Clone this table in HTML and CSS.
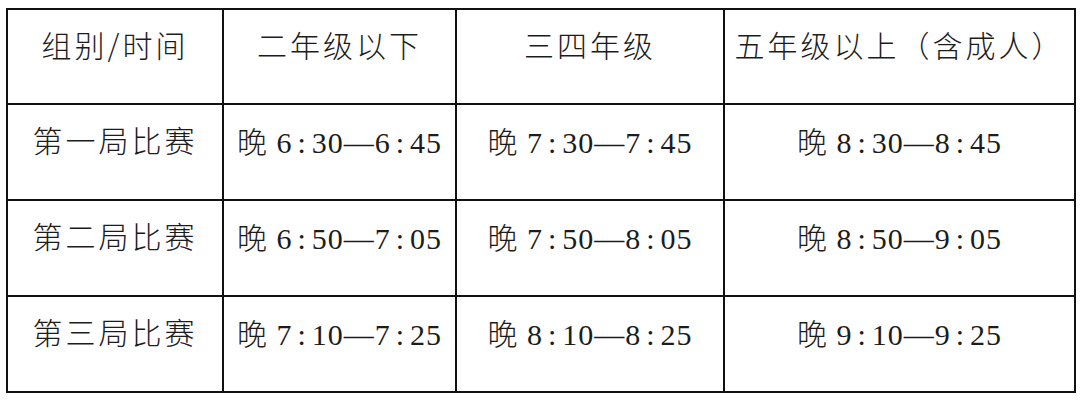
FILE: index.html
```html
<!DOCTYPE html>
<html>
<head>
<meta charset="utf-8">
<link rel="stylesheet" href="styles.css">
</head>
<body>
<table class="sched">
  <colgroup>
    <col class="c1"><col class="c2"><col class="c3"><col class="c4">
  </colgroup>
  <tr class="head">
    <td lang="zh-CN">组别/时间</td>
    <td lang="zh-CN">二年级以下</td>
    <td lang="zh-CN">三四年级</td>
    <td lang="zh-CN">五年级以上（含成人）</td>
  </tr>
  <tr>
    <td lang="zh-CN">第一局比赛</td>
    <td class="t"><span class="cj">晚</span> 6<span class="co">:</span>30—6<span class="co">:</span>45</td>
    <td class="t"><span class="cj">晚</span> 7<span class="co">:</span>30—7<span class="co">:</span>45</td>
    <td class="t"><span class="cj">晚</span> 8<span class="co">:</span>30—8<span class="co">:</span>45</td>
  </tr>
  <tr>
    <td lang="zh-CN">第二局比赛</td>
    <td class="t"><span class="cj">晚</span> 6<span class="co">:</span>50—7<span class="co">:</span>05</td>
    <td class="t"><span class="cj">晚</span> 7<span class="co">:</span>50—8<span class="co">:</span>05</td>
    <td class="t"><span class="cj">晚</span> 8<span class="co">:</span>50—9<span class="co">:</span>05</td>
  </tr>
  <tr>
    <td lang="zh-CN">第三局比赛</td>
    <td class="t"><span class="cj">晚</span> 7<span class="co">:</span>10—7<span class="co">:</span>25</td>
    <td class="t"><span class="cj">晚</span> 8<span class="co">:</span>10—8<span class="co">:</span>25</td>
    <td class="t"><span class="cj">晚</span> 9<span class="co">:</span>10—9<span class="co">:</span>25</td>
  </tr>
</table>
</body>
</html>
```
FILE: styles.css
```css
html, body {
  margin: 0;
  padding: 0;
  background: #ffffff;
}
body {
  padding: 8px 0 0 6px;
}
.sched {
  border-collapse: collapse;
  table-layout: fixed;
  width: 1068px;
  font-size: 30px;
  color: #1c1c1c;
}
.c1 { width: 216px; }
.c2 { width: 233px; }
.c3 { width: 268px; }
.c4 { width: 351px; }
.sched td {
  border: 2px solid #111111;
  height: 96px;
  padding: 12px 0 0 0;
  box-sizing: border-box;
  text-align: center;
  vertical-align: top;
  line-height: 45px;
  white-space: nowrap;
  font-family: "Noto Sans CJK SC", sans-serif;
  font-weight: 300;
  letter-spacing: 3px;
}
.sched td.t {
  padding-top: 13px;
  font-family: "Liberation Serif", "Times New Roman", "DejaVu Serif", serif;
  font-weight: 400;
  letter-spacing: 1px;
}
.sched tr.head td {
  height: 95px;
}
.cj {
  font-family: "Noto Sans CJK SC", sans-serif;
  font-weight: 300;
}
.co {
  margin: 0 5px;
}
```
